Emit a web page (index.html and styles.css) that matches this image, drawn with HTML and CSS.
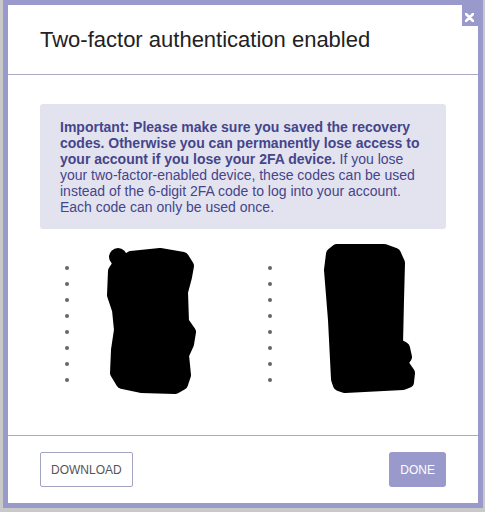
FILE: index.html
```html
<!DOCTYPE html>
<html lang="en">
<head>
<meta charset="utf-8">
<title>Two-factor authentication enabled</title>
<link rel="stylesheet" href="styles.css">
</head>
<body>
<div class="modal">
  <button class="close" aria-label="Close">
    <svg width="9" height="9" viewBox="0 0 9 9"><path d="M1 1 L8 8 M8 1 L1 8" stroke="#fff" stroke-width="2.6" stroke-linecap="round"/></svg>
  </button>
  <div class="modal-header">
    <h2 class="modal-title">Two-factor authentication enabled</h2>
  </div>
  <div class="modal-body">
    <div class="notice">
      <strong>Important: Please make sure you saved the recovery codes. Otherwise you can permanently lose access to your account if you lose your 2FA device.</strong> If you lose your two-factor-enabled device, these codes can be used instead of the 6-digit 2FA code to log into your account. Each code can only be used once.
    </div>
    <div class="codes">
      <div class="code-col">
        <ul class="code-list">
          <li></li><li></li><li></li><li></li><li></li><li></li><li></li><li></li>
        </ul>
        <svg class="redact redact-left" width="92" height="150" viewBox="0 0 92 150">
          <circle cx="11" cy="10" r="9" fill="#000"/>
          <polygon points="11,18 24,10 53,7 76,11 81,19 79,30 75,45 76,75 83,85 81,97 76,108 78,128 75,137 68,141 34,140 15,136 9,126 10,103 13,83 11,63 6,48 7,24" fill="#000" stroke="#000" stroke-width="12" stroke-linejoin="round"/>
        </svg>
      </div>
      <div class="code-col">
        <ul class="code-list">
          <li></li><li></li><li></li><li></li><li></li><li></li><li></li><li></li>
        </ul>
        <svg class="redact redact-right" width="96" height="152" viewBox="0 0 96 152">
          <polygon points="9,10 14,6 61,6 72,10 76,19 75,56 74,100 81,104 83,113 79,119 86,129 85,138 80,140 22,143 16,141 14,135 11,76 7,26" fill="#000" stroke="#000" stroke-width="12" stroke-linejoin="round"/>
        </svg>
      </div>
    </div>
  </div>
  <div class="modal-footer">
    <button class="btn btn-outline">DOWNLOAD</button>
    <button class="btn btn-primary">DONE</button>
  </div>
</div>
</body>
</html>
```
FILE: styles.css
```css
html, body {
  margin: 0;
  padding: 0;
}
body {
  background: #c9c9c9;
  font-family: "Liberation Sans", Arial, sans-serif;
  width: 485px;
  height: 512px;
  overflow: hidden;
}
.modal {
  position: relative;
  box-sizing: border-box;
  width: 480px;
  height: 508px;
  margin-left: 3px;
  border: 5px solid #9999cc;
  background: #fff;
  display: flex;
  flex-direction: column;
}
.close {
  position: absolute;
  top: -5px;
  right: -5px;
  width: 21px;
  height: 26px;
  box-sizing: border-box;
  padding: 9px 0 0 3px;
  border: none;
  background: #9999cc;
  display: block;
  text-align: left;
  cursor: pointer;
}
.close svg {
  display: block;
}
.modal-header {
  padding: 22px 32px;
  border-bottom: 1px solid #ababc6;
}
.modal-title {
  margin: 0;
  font-size: 22px;
  line-height: 25px;
  font-weight: normal;
  color: #222;
}
.modal-body {
  flex: 1;
  padding: 29px 32px 0;
}
.notice {
  background: #e3e3f0;
  border-radius: 3px;
  padding: 15px 20px 14px;
  font-size: 14px;
  line-height: 16px;
  color: #45458a;
}
.notice strong {
  font-weight: bold;
}
.codes {
  display: grid;
  grid-template-columns: 1fr 1fr;
  margin-top: 30px;
}
.code-col {
  position: relative;
}
.code-list {
  margin: 0;
  padding-left: 40px;
  font-size: 14px;
  line-height: 16px;
  color: #666;
}
.code-list li {
  height: 16px;
}
.redact {
  position: absolute;
  display: block;
}
.redact-left {
  left: 67px;
  top: -12px;
}
.redact-right {
  left: 80px;
  top: -15px;
}
.modal-footer {
  border-top: 1px solid #ababc6;
  padding: 16px 32px;
  display: flex;
  justify-content: space-between;
  align-items: center;
}
.btn {
  height: 35px;
  font-family: "Liberation Sans", Arial, sans-serif;
  font-size: 12px;
  border-radius: 2px;
  cursor: pointer;
}
.btn-outline {
  padding: 0 10px;
  background: #fff;
  border: 1px solid #a3a3c2;
  color: #555;
}
.btn-primary {
  padding: 0 11px;
  background: #9999cc;
  border: none;
  border-radius: 3px;
  color: #fff;
}
```
